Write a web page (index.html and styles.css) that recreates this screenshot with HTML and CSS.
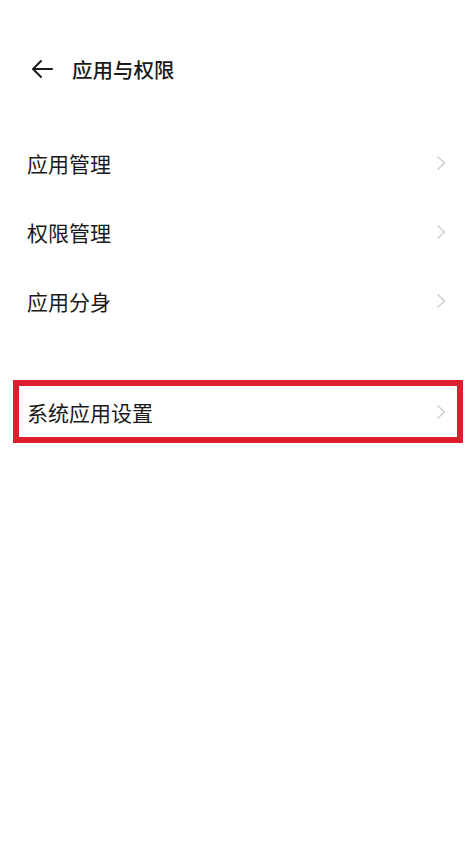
FILE: index.html
```html
<!DOCTYPE html>
<html lang="zh-CN">
<head>
  <meta charset="UTF-8" />
  <meta name="viewport" content="width=device-width, initial-scale=1.0" />
  <title>应用与权限</title>
  <link rel="stylesheet" href="styles.css">
</head>
<body>

  <div class="header">
    <svg class="back" viewBox="0 0 24 24" width="24" height="24">
      <path d="M22 12H3M11 4L3 12l8 8" fill="none" stroke="#1a1a1a" stroke-width="2" stroke-linecap="round" stroke-linejoin="round"/>
    </svg>
    <span class="title">应用与权限</span>
  </div>

  <div class="list">
    <div class="row">
      <span class="label">应用管理</span>
      <svg class="chev" viewBox="0 0 10 16" width="10" height="16"><path d="M1.5 1.5L8.5 8l-7 6.5" fill="none" stroke="#cfcfcf" stroke-width="1.5"/></svg>
    </div>
    <div class="row">
      <span class="label">权限管理</span>
      <svg class="chev" viewBox="0 0 10 16" width="10" height="16"><path d="M1.5 1.5L8.5 8l-7 6.5" fill="none" stroke="#cfcfcf" stroke-width="1.5"/></svg>
    </div>
    <div class="row">
      <span class="label">应用分身</span>
      <svg class="chev" viewBox="0 0 10 16" width="10" height="16"><path d="M1.5 1.5L8.5 8l-7 6.5" fill="none" stroke="#cfcfcf" stroke-width="1.5"/></svg>
    </div>
  </div>

  <div class="list system">
    <div class="row marked">
      <span class="label">系统应用设置</span>
      <svg class="chev" viewBox="0 0 10 16" width="10" height="16"><path d="M1.5 1.5L8.5 8l-7 6.5" fill="none" stroke="#cfcfcf" stroke-width="1.5"/></svg>
    </div>
  </div>

</body>
</html>
```

FILE: styles.css
```css
body {
  margin: 0;
  font-family: "Noto Sans CJK SC", "Noto Sans", sans-serif;
  background: #fff;
  color: #1a1a1a;
  width: 475px;
  height: 844px;
  overflow: hidden;
}

.header {
  display: flex;
  align-items: center;
  height: 48px;
  margin-top: 45px;
  padding-left: 30px;
}

.back {
  margin-right: 18px;
}

.title {
  font-size: 20.5px;
  font-weight: 500;
}

.list {
  margin-top: 35px;
}

.row {
  display: flex;
  align-items: center;
  justify-content: space-between;
  height: 69px;
  padding: 0 29px 0 27px;
}

.label {
  font-size: 21px;
}

.system {
  margin-top: 45px;
}

.row.marked {
  height: 51px;
  margin: 0 12px 0 13px;
  padding: 0 11px 0 8px;
  border: 6px solid #dc1f2e;
}
```
